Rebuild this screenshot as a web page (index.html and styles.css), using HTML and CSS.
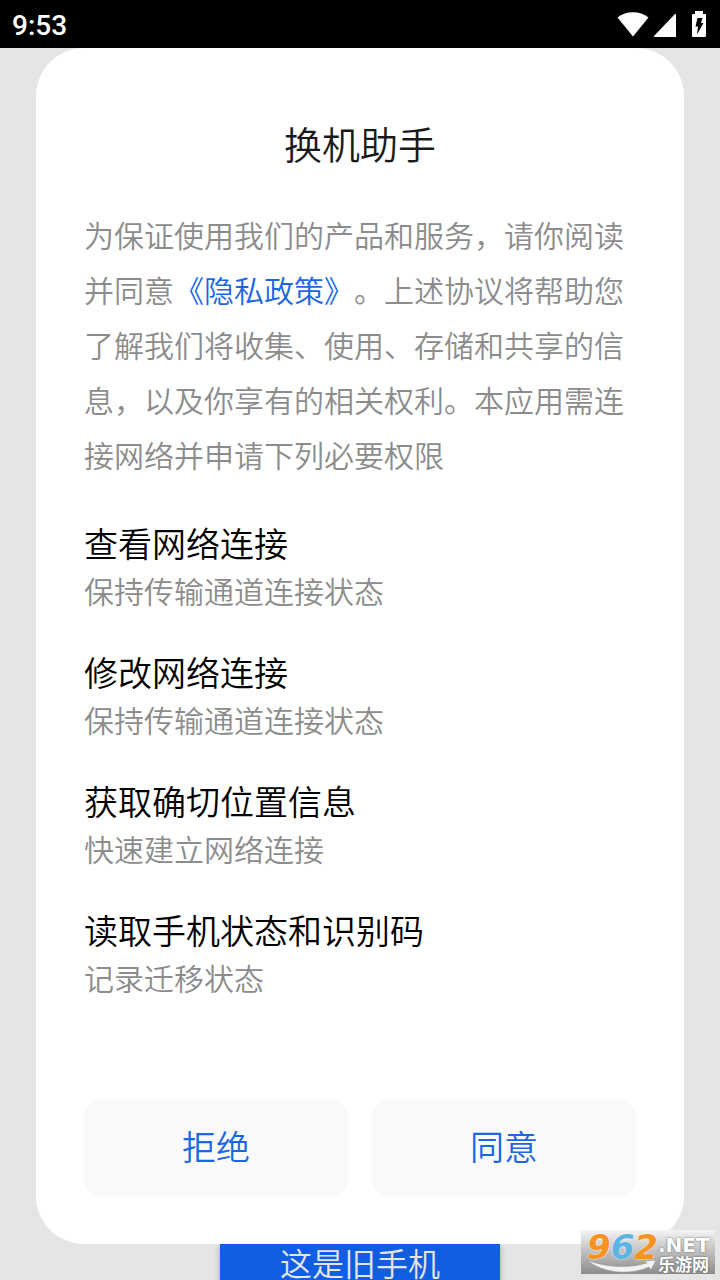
FILE: index.html
```html
<!DOCTYPE html>
<html lang="zh-CN">
<head>
    <meta charset="UTF-8">
    <meta name="viewport" content="width=device-width, initial-scale=1.0">
    <title>换机助手</title>
    <link rel="stylesheet" href="styles.css">
</head>
<body>
    <header class="status-bar">
        <span class="clock">9:53</span>
        <div class="status-icons">
            <svg width="32" height="25" viewBox="0 0 32 25" aria-hidden="true">
                <path d="M0.500 5.500C9 -1.500 23 -1.500 31.500 5.500L16 24.500Z" fill="#fff"/>
            </svg>
            <svg class="signal" width="22" height="23" viewBox="0 0 22 23" aria-hidden="true">
                <path d="M21 0H22V23H0V22Z" fill="#fff"/>
            </svg>
            <svg width="14" height="26" viewBox="0 0 14 26" aria-hidden="true">
                <path d="M3 0H11V3H13Q14 3 14 4V25Q14 26 13 26H1Q0 26 0 25V4Q0 3 1 3H3Z" fill="#fff"/>
                <path d="M5.500 7H10.500L9 12H11.500L5 23.500L6 15.500H3.500Z" fill="#000"/>
            </svg>
        </div>
    </header>

    <main class="screen">
        <section class="dialog" role="dialog" aria-labelledby="dialog-title">
            <h1 class="dialog-title" id="dialog-title">换机助手</h1>
            <p class="intro">为保证使用我们的产品和服务，请你阅读并同意<a href="#">《隐私政策》</a>。上述协议将帮助您了解我们将收集、使用、存储和共享的信息，以及你享有的相关权利。本应用需连接网络并申请下列必要权限</p>

            <ul class="permissions">
                <li>
                    <h2>查看网络连接</h2>
                    <p>保持传输通道连接状态</p>
                </li>
                <li>
                    <h2>修改网络连接</h2>
                    <p>保持传输通道连接状态</p>
                </li>
                <li>
                    <h2>获取确切位置信息</h2>
                    <p>快速建立网络连接</p>
                </li>
                <li>
                    <h2>读取手机状态和识别码</h2>
                    <p>记录迁移状态</p>
                </li>
            </ul>

            <div class="actions">
                <button type="button" class="action">拒绝</button>
                <button type="button" class="action">同意</button>
            </div>
        </section>

        <button type="button" class="old-phone">这是旧手机</button>
    </main>

    <div class="watermark">
        <div class="mark-number"><span class="orange">9</span><span class="blue">6</span><span class="orange">2</span></div>
        <div class="mark-side">
            <span class="mark-net">.NET</span>
            <span class="mark-name">乐游网</span>
        </div>
        <svg class="swoosh" width="70" height="14" viewBox="0 0 70 14" aria-hidden="true">
            <path d="M0 1C18 8 40 10 60 4L57 2L69 1L64 11L62 8C42 17 15 14 0 1Z" fill="#f2f2f2" stroke="#888" stroke-width="0.500"/>
        </svg>
    </div>
</body>
</html>
```

FILE: styles.css
```css
* {
    box-sizing: border-box;
}

body {
    margin: 0;
    height: 100vh;
    display: flex;
    flex-direction: column;
    overflow: hidden;
    position: relative;
    background-color: #e5e5e5;
    font-family: "Noto Sans CJK SC", sans-serif;
    font-weight: 350;
    text-spacing-trim: space-all;
}

h1, h2, p, ul {
    margin: 0;
    padding: 0;
    font-weight: inherit;
}

button {
    border: none;
    font-family: inherit;
    font-weight: inherit;
    cursor: pointer;
}

.status-bar {
    flex: none;
    height: 48px;
    padding: 0 14px 0 12px;
    display: flex;
    justify-content: space-between;
    align-items: center;
    background-color: #000;
    color: #fff;
}

.clock {
    font-family: Roboto, sans-serif;
    font-size: 28px;
    font-weight: 500;
    line-height: 46px;
    padding-top: 4px;
}

.status-icons {
    display: flex;
    align-items: flex-end;
}

.signal {
    margin: 0 16px 0 5px;
}

.screen {
    flex: 1;
    min-height: 0;
    display: flex;
    flex-direction: column;
}

.dialog {
    flex: none;
    position: relative;
    margin: 0 36px;
    padding: 67px 48px 48px;
    border-radius: 48px;
    background-color: #fff;
}

.dialog-title {
    font-size: 38px;
    line-height: 56px;
    text-align: center;
    color: #1a1a1a;
}

.intro {
    margin-top: 36px;
    font-size: 30px;
    line-height: 55px;
    color: #8c8c8c;
}

.intro a {
    color: #1a66e5;
    text-decoration: none;
}

.permissions {
    margin-top: 36px;
    display: flex;
    flex-direction: column;
    gap: 35px;
    list-style: none;
}

.permissions h2 {
    font-size: 34px;
    line-height: 50px;
    color: #000;
}

.permissions p {
    font-size: 30px;
    line-height: 44px;
    color: #8c8c8c;
}

.actions {
    margin-top: 101px;
    display: flex;
    gap: 24px;
}

.action {
    flex: 1;
    height: 96px;
    padding: 0 0 6px;
    border-radius: 16px;
    background-color: #fafafa;
    color: #1a66e5;
    font-size: 34px;
}

.old-phone {
    flex: none;
    align-self: center;
    width: 280px;
    height: 80px;
    padding: 0 0 44px;
    background-color: #115ee2;
    box-shadow: 0 2px 6px rgba(0, 0, 0, 0.3);
    color: #e5e5e5;
    font-size: 32px;
    line-height: 36px;
}

.watermark {
    position: absolute;
    right: 5px;
    bottom: 6px;
    width: 134px;
    height: 44px;
    padding-left: 6px;
    display: flex;
    background: linear-gradient(#f4f4f4, #c4c4c4 45%, #8c8c8c);
    font-weight: bold;
}

.mark-number {
    font-family: "DejaVu Sans", sans-serif;
    font-size: 34px;
    font-style: italic;
    line-height: 34px;
    text-shadow: 0 0 2px #fff;
}

.orange {
    color: #f7931e;
}

.blue {
    color: #5cb4e4;
}

.mark-side {
    display: flex;
    flex-direction: column;
    color: #fff;
    text-shadow: 0 0 2px #555;
}

.mark-net {
    font-family: "DejaVu Sans", sans-serif;
    font-size: 20px;
    line-height: 24px;
    padding-top: 3px;
}

.mark-name {
    font-size: 17px;
    line-height: 14px;
}

.swoosh {
    position: absolute;
    left: 6px;
    bottom: 1px;
}
```
